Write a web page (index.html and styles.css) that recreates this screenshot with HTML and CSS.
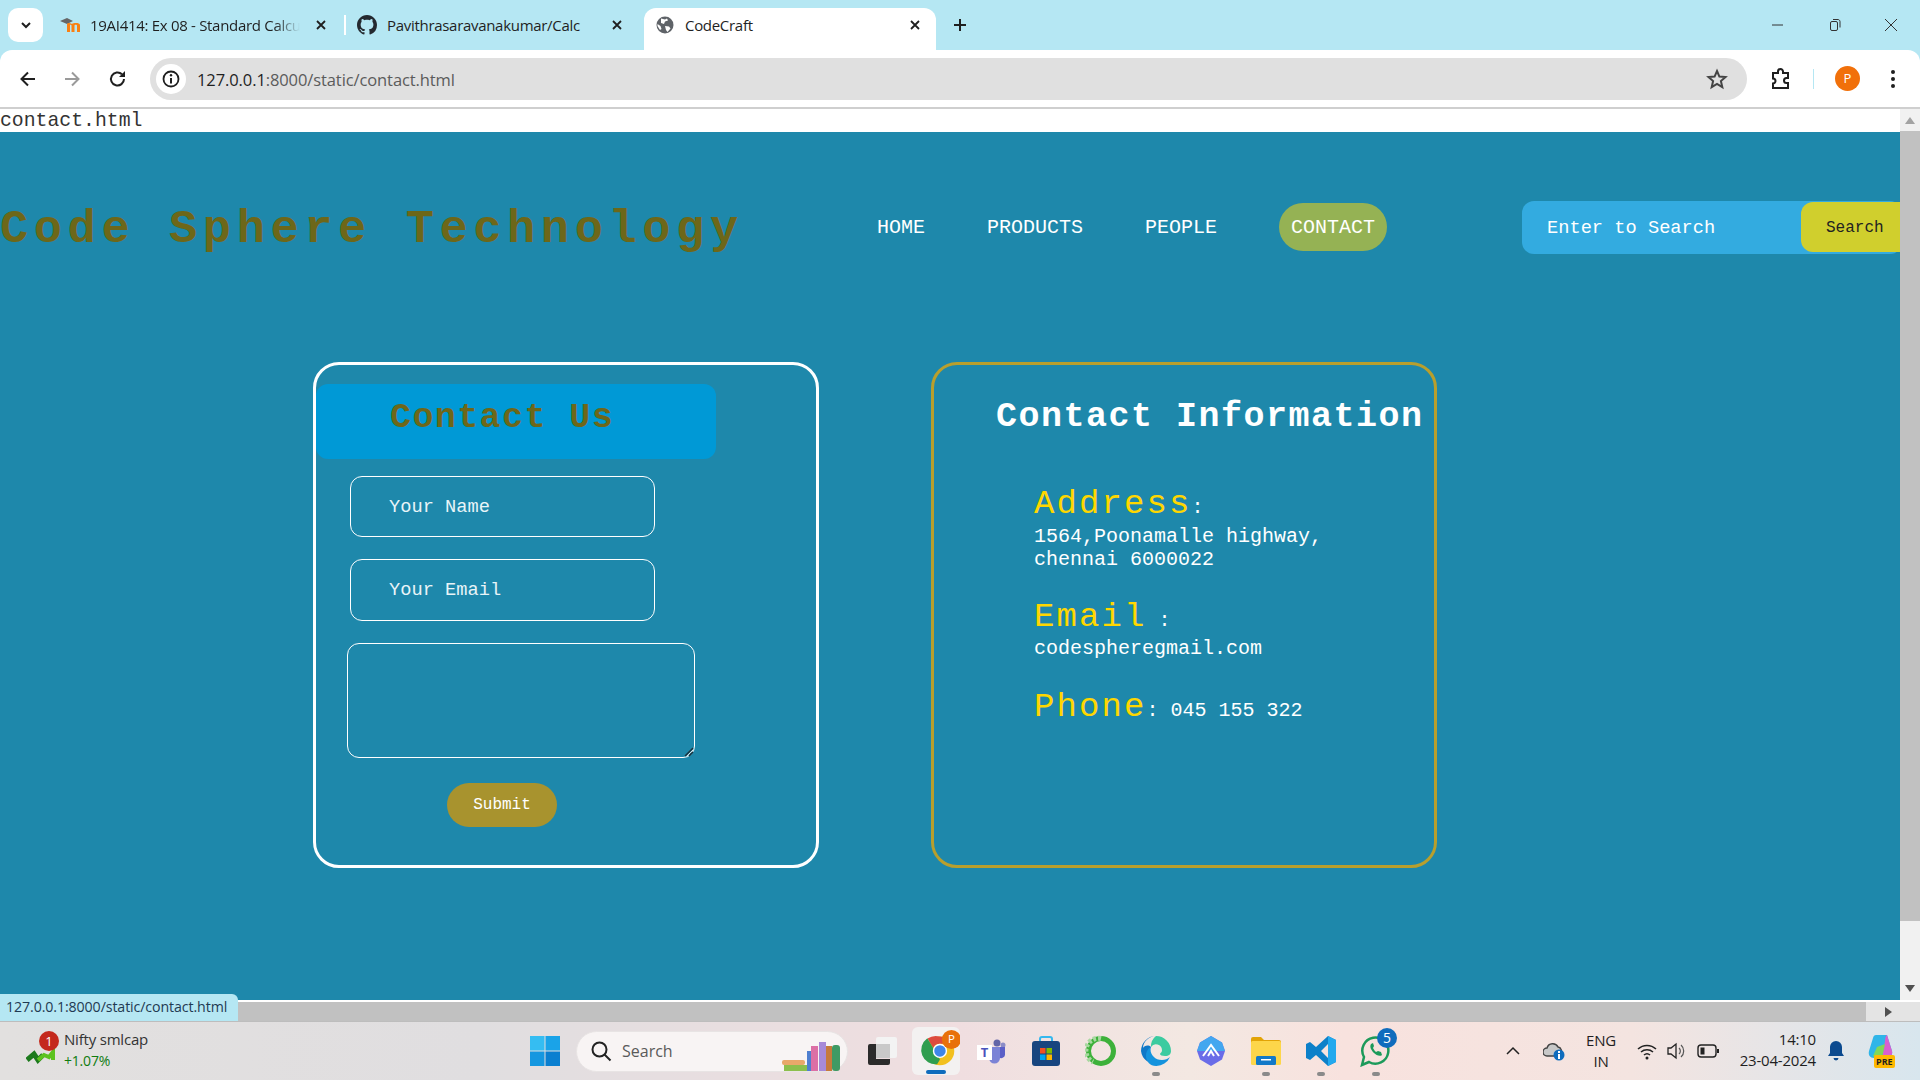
FILE: index.html
```html
<!DOCTYPE html>
<html lang="en">
<head>
  <meta charset="UTF-8" />
  <title>CodeCraft</title>
  <link rel="stylesheet" href="styles.css">
</head>
<body>
  <div class="tabstrip">
    <div class="tab-search">
      <svg width="14" height="14" viewBox="0 0 14 14"><path d="M3 5l4 4 4-4" fill="none" stroke="#1f1f1f" stroke-width="2"/></svg>
    </div>
    <div class="tab tab-one">
      <svg class="favicon" width="22" height="18" viewBox="0 0 22 18"><path d="M0 5l7-3 6 3-6 3z" fill="#666"/><path d="M7 16V8.500c0-2 3-2 5-.5 1.500-1.500 8-1.500 8 1v7h-3V9.500c0-1-2.500-1-2.500 0V16h-3V9.500c0-1-1.500-1-1.500-.5V16z" fill="#f98012"/></svg>
      <span class="tab-title fade">19AI414: Ex 08 - Standard Calcu</span>
      <svg class="tab-close" width="12" height="12" viewBox="0 0 12 12"><path d="M2 2l8 8M10 2l-8 8" stroke="#1f1f1f" stroke-width="1.800"/></svg>
    </div>
    <div class="tab-sep"></div>
    <div class="tab tab-two">
      <svg class="favicon" width="20" height="20" viewBox="0 0 16 16"><path fill="#24292f" d="M8 0C3.580 0 0 3.580 0 8c0 3.540 2.290 6.530 5.470 7.590.4.070.55-.17.55-.38 0-.19-.01-.82-.01-1.490-2.010.37-2.530-.49-2.690-.94-.09-.23-.48-.94-.82-1.130-.28-.15-.68-.52-.01-.53.63-.01 1.080.58 1.230.82.72 1.210 1.870.87 2.330.66.070-.52.28-.87.51-1.070-1.780-.2-3.640-.89-3.640-3.950 0-.87.31-1.590.82-2.150-.08-.2-.36-1.020.08-2.120 0 0 .67-.21 2.200.82.64-.18 1.320-.27 2-.27.68 0 1.360.09 2 .27 1.530-1.040 2.200-.82 2.200-.82.44 1.100.16 1.920.08 2.120.51.56.82 1.270.82 2.150 0 3.070-1.870 3.750-3.650 3.950.29.25.54.73.54 1.480 0 1.070-.01 1.930-.01 2.200 0 .21.15.46.55.38A8.013 8.013 0 0016 8c0-4.420-3.580-8-8-8z"/></svg>
      <span class="tab-title">Pavithrasaravanakumar/Calc</span>
      <svg class="tab-close" width="12" height="12" viewBox="0 0 12 12"><path d="M2 2l8 8M10 2l-8 8" stroke="#1f1f1f" stroke-width="1.800"/></svg>
    </div>
    <div class="tab tab-active">
      <svg class="favicon" width="18" height="18" viewBox="0 0 18 18"><circle cx="9" cy="9" r="8.500" fill="#5f6368"/><path d="M5 2.500l4 1 2-1 1 2-3 1-1 2.500-3-1zM9 10l4 .5 1.500 2-3 3.500-1.500-2zM1.500 8l3 2 1 3-1.500 1-2.500-4z" fill="#fff"/></svg>
      <span class="tab-title">CodeCraft</span>
      <svg class="tab-close" width="12" height="12" viewBox="0 0 12 12"><path d="M2 2l8 8M10 2l-8 8" stroke="#1f1f1f" stroke-width="1.800"/></svg>
    </div>
    <svg class="new-tab" width="14" height="14" viewBox="0 0 14 14"><path d="M7 1v12M1 7h12" stroke="#1f1f1f" stroke-width="2"/></svg>
    <div class="window-btns">
      <svg width="14" height="14" viewBox="0 0 14 14"><path d="M1 7h11" stroke="#333" stroke-width="1"/></svg>
      <svg width="14" height="14" viewBox="0 0 14 14"><rect x="2.500" y="3.500" width="7" height="9" rx="1.500" fill="none" stroke="#333"/><path d="M5 1.500h5c1 0 2 1 2 2v6" fill="none" stroke="#333"/></svg>
      <svg width="14" height="14" viewBox="0 0 14 14"><path d="M1 1l12 12M13 1L1 13" stroke="#333" stroke-width="1"/></svg>
    </div>
  </div>

  <div class="toolbar">
    <svg class="tool back" width="20" height="20" viewBox="0 0 20 20"><path d="M17 10H4M10 3.500L3.500 10l6.500 6.500" fill="none" stroke="#1f1f1f" stroke-width="2"/></svg>
    <svg class="tool forward" width="20" height="20" viewBox="0 0 20 20"><path d="M3 10h13M10 3.500l6.500 6.500-6.500 6.500" fill="none" stroke="#9a9a9a" stroke-width="2"/></svg>
    <svg class="tool reload" width="20" height="20" viewBox="0 0 20 20"><path d="M16 10a6.500 6.500 0 1 1-2-4.700" fill="none" stroke="#1f1f1f" stroke-width="2"/><path d="M17 2v6h-6z" fill="#1f1f1f"/></svg>
    <div class="omnibox">
      <div class="site-info">
        <svg width="20" height="20" viewBox="0 0 20 20"><circle cx="10" cy="10" r="7.500" fill="none" stroke="#1f1f1f" stroke-width="1.800"/><path d="M10 9v5.500" stroke="#1f1f1f" stroke-width="2"/><circle cx="10" cy="6.200" r="1.200" fill="#1f1f1f"/></svg>
      </div>
      <span class="url"><b>127.0.0.1</b>:8000/static/contact.html</span>
      <svg class="star" width="22" height="22" viewBox="0 0 22 22"><path d="M11 3l2.400 5.600 6.100.5-4.600 4 1.400 6-5.300-3.200-5.300 3.200 1.400-6-4.600-4 6.100-.5z" fill="none" stroke="#444" stroke-width="2"/></svg>
    </div>
    <svg class="tool ext" width="22" height="22" viewBox="0 0 22 22"><path d="M3 5h5V3.500a2.500 2.500 0 0 1 5 0V5h5v5h-1.500a2.500 2.500 0 0 0 0 5H18v5H3v-4.500a2.500 2.500 0 0 0 0-5z" fill="none" stroke="#1f1f1f" stroke-width="2"/></svg>
    <div class="tool-sep"></div>
    <div class="avatar">P</div>
    <svg class="tool menu" width="6" height="20" viewBox="0 0 6 20"><circle cx="3" cy="3" r="2" fill="#1f1f1f"/><circle cx="3" cy="10" r="2" fill="#1f1f1f"/><circle cx="3" cy="17" r="2" fill="#1f1f1f"/></svg>
  </div>

  <div class="viewport">
    <div class="page">
      <div class="filename">contact.html</div>
      <div class="content">
        <header class="site-header">
          <div class="logo">Code Sphere Technology</div>
          <nav class="nav">
            <a>HOME</a>
            <a>PRODUCTS</a>
            <a>PEOPLE</a>
            <a class="active">CONTACT</a>
          </nav>
          <div class="search-box">
            <span class="search-hint">Enter to Search</span>
            <button class="search-btn" type="button">Search</button>
          </div>
        </header>

        <main class="contact">
          <section class="card card-form">
            <h2 class="form-title">Contact Us</h2>
            <form class="form">
              <input class="field" type="text" placeholder="Your Name" />
              <input class="field field-email" type="email" placeholder="Your Email" />
              <div class="message-wrap">
                <textarea class="message"></textarea>
                <svg class="grip" width="10" height="10" viewBox="0 0 10 10"><path d="M1 9l8-8M5 9l4-4" stroke="#1c2f38" stroke-width="1.300"/><path d="M3 9l6-6" stroke="#d8e4e8" stroke-width="1"/></svg>
              </div>
              <button class="submit" type="button">Submit</button>
            </form>
          </section>

          <section class="card card-info">
            <h2 class="info-title">Contact Information</h2>
            <div class="info">
              <div class="info-line first-line"><span class="label">Address</span><span class="colon">:</span></div>
              <p class="info-text">1564,Poonamalle highway,<br/>chennai 6000022</p>
              <div class="info-line gap-email"><span class="label">Email</span><span class="colon"> :</span></div>
              <p class="info-text">codespheregmail.com</p>
              <div class="info-line gap-phone"><span class="label">Phone</span><span class="colon">:</span><span class="info-text"> 045 155 322</span></div>
            </div>
          </section>
        </main>
      </div>
    </div>
    <div class="vscroll">
      <div class="arrow-up"></div>
      <div class="vthumb"></div>
      <div class="arrow-down"></div>
    </div>
  </div>

  <div class="hscroll">
    <div class="hthumb"></div>
    <div class="hcorner"><div class="arrow-right"></div></div>
    <div class="status">127.0.0.1:8000/static/contact.html</div>
  </div>

  <footer class="taskbar">
    <div class="widget">
      <div class="widget-icon">
        <svg width="30" height="20" viewBox="0 0 30 20"><path d="M1 14l7-6 4 6 5-5" fill="none" stroke="#1d7a1d" stroke-width="5"/><path d="M12 14l6-5 5 2 4-5v8" fill="none" stroke="#5cc21f" stroke-width="4"/></svg>
        <span class="widget-badge">1</span>
      </div>
      <div class="widget-text">
        <div class="widget-name">Nifty smlcap</div>
        <div class="widget-up">+1.07%</div>
      </div>
    </div>

    <svg class="win" width="30" height="30" viewBox="0 0 30 30">
      <rect width="14.500" height="14.500" fill="#35bdf2"/><rect x="15.500" width="14.500" height="14.500" fill="#1aa3e8"/>
      <rect y="15.500" width="14.500" height="14.500" fill="#1597e0"/><rect x="15.500" y="15.500" width="14.500" height="14.500" fill="#0a7fd0"/>
    </svg>

    <div class="tb-search">
      <svg width="22" height="22" viewBox="0 0 22 22"><circle cx="9.500" cy="9.500" r="7" fill="none" stroke="#222" stroke-width="2"/><path d="M14.500 14.500l6 6" stroke="#222" stroke-width="2"/></svg>
      <span>Search</span>
      <svg class="books" width="64" height="32" viewBox="0 0 64 32">
        <rect x="0" y="21" width="23" height="5" rx="2" fill="#e8a86a"/><rect x="2" y="26" width="24" height="6" fill="#8cbf4d"/>
        <rect x="25" y="12" width="4" height="20" fill="#4f7fd0"/><rect x="29" y="7" width="7" height="25" fill="#dc6fa5"/>
        <rect x="37" y="3" width="7" height="29" fill="#a78ad8"/><rect x="44" y="7" width="6" height="25" fill="#c67a3c"/><rect x="50" y="6" width="8" height="26" rx="3" fill="#3f9a64"/>
      </svg>
    </div>

    <div class="tb-apps">
      <div class="tb-slot">
        <svg width="30" height="30" viewBox="0 0 30 30"><rect x="9" y="1" width="21" height="21" rx="2" fill="#f3f3f3"/><rect x="9" y="8" width="14" height="14" fill="#c9c9c9"/><path d="M1 10a2 2 0 0 1 2-2h6v15h14v4a2 2 0 0 1-2 2H3a2 2 0 0 1-2-2z" fill="#2b2b2b"/></svg>
      </div>
      <div class="tb-slot tb-current">
        <svg width="44" height="44" viewBox="0 0 44 44"><circle cx="23" cy="24" r="15" fill="#f2c01e"/><path d="M23 9a15 15 0 0 1 13 7.500H23a7.500 7.500 0 0 0-7 4.500L10 11a15 15 0 0 1 13-2z" fill="#dd4b3e"/><path d="M10 11l6.500 11 6.500 11 -3 5a15 15 0 0 1-10.500-27z" fill="#2f9e4f"/><circle cx="23" cy="24" r="7.500" fill="#fff"/><circle cx="23" cy="24" r="6" fill="#3f86e8"/><circle cx="35" cy="12" r="10" fill="#e8710a"/><text x="35" y="16" class="chrome-p">P</text></svg>
        <span class="run-line"></span>
      </div>
      <div class="tb-slot">
        <svg width="30" height="30" viewBox="0 0 30 30"><circle cx="21" cy="7" r="3.500" fill="#6264a7"/><circle cx="27" cy="9" r="2.500" fill="#8b8cc7"/><path d="M13 11h11v11a5.500 5.500 0 0 1-11 0z" fill="#7b83d6"/><path d="M24 11h5v8a4 4 0 0 1-5 3z" fill="#5b5fc7"/><rect x="1" y="9" width="15" height="15" fill="#fff"/><text x="8.500" y="21" class="teams-t">T</text></svg>
      </div>
      <div class="tb-slot">
        <svg width="30" height="30" viewBox="0 0 30 30"><path d="M9 6V3a2 2 0 0 1 2-2h8a2 2 0 0 1 2 2v3" fill="none" stroke="#35b8ee" stroke-width="2"/><rect x="1" y="5" width="28" height="25" rx="3" fill="#17457f"/><rect x="9" y="12" width="5.500" height="5.500" fill="#f25022"/><rect x="15.500" y="12" width="5.500" height="5.500" fill="#7fba00"/><rect x="9" y="18.500" width="5.500" height="5.500" fill="#00a4ef"/><rect x="15.500" y="18.500" width="5.500" height="5.500" fill="#ffb900"/></svg>
      </div>
      <div class="tb-slot">
        <svg width="32" height="32" viewBox="0 0 32 32"><circle cx="16" cy="16" r="12.500" fill="none" stroke="#3db13a" stroke-width="5"/><path d="M16 3.500A12.500 12.500 0 0 0 8 27" fill="none" stroke="#a8d8a0" stroke-width="5" stroke-dasharray="3 2"/></svg>
      </div>
      <div class="tb-slot">
        <svg width="30" height="30" viewBox="0 0 30 30"><path d="M15 0a15 15 0 0 1 15 15c0 3-2 5-6 5-3 0-5-1-5-2 0-1 2-1 2-4a6 6 0 0 0-11-3A13 13 0 0 1 15 0z" fill="#3ccba0"/><path d="M10 11c-4 5-1 14 7 17A15 15 0 0 1 0 15 15 15 0 0 1 15 0C8 0 2 6 2 12c1-2 5-4 8-1z" fill="#0f78c8"/><path d="M10 11c-2 6 3 13 11 13 3 0 6-1 8-3a15 15 0 0 1-14 9C9 30 5 25 5 20c0-4 2-8 5-9z" fill="#1593dd"/></svg>
        <span class="run-dot"></span>
      </div>
      <div class="tb-slot">
        <svg width="28" height="30" viewBox="0 0 28 30"><path d="M14 0l11 6.500 3 8.500-3 8.500L14 30 3 23.500 0 15l3-8.500z" fill="#6a6ce8"/><path d="M14 0l11 6.500 3 8.500H0l3-8.500z" fill="#43a7ef"/><path d="M6 20l8-11 8 11M11 20l3-5 3 5" fill="none" stroke="#fff" stroke-width="2"/></svg>
      </div>
      <div class="tb-slot">
        <svg width="30" height="28" viewBox="0 0 30 28"><path d="M0 2a2 2 0 0 1 2-2h8l3 3h15a2 2 0 0 1 2 2v3H0z" fill="#e2a306"/><rect y="4" width="30" height="24" rx="1.500" fill="#fdd64a"/><rect x="5" y="19" width="20" height="9" rx="1.500" fill="#1279c8"/><rect x="10" y="22" width="10" height="1.500" fill="#fff"/></svg>
        <span class="run-dot"></span>
      </div>
      <div class="tb-slot">
        <svg width="30" height="30" viewBox="0 0 30 30"><path d="M22 0l8 4v22l-8 4-12-11-6 5-4-2V8l4-2 6 5zM22 8l-7 7 7 7z" fill="#0d80c9"/><path d="M22 0l8 4v22l-8 4z" fill="#23a9ee"/></svg>
        <span class="run-dot"></span>
      </div>
      <div class="tb-slot">
        <svg width="32" height="32" viewBox="0 0 32 32"><path d="M2 30l2-8a13 13 0 1 1 5 5z" fill="none" stroke="#1c9a5a" stroke-width="2.500"/><path d="M11 9c-2 3 1 7 3 9s6 4 8 2l-1-3-3-1-2 1c-1-1-2-2-3-4l1-2-1-3z" fill="#1c9a5a"/></svg>
        <span class="wa-badge">5</span>
        <span class="run-dot"></span>
      </div>
    </div>

    <div class="tray">
      <svg class="tray-up" width="16" height="10" viewBox="0 0 16 10"><path d="M2 8l6-6 6 6" fill="none" stroke="#222" stroke-width="1.500"/></svg>
      <svg class="tray-cloud" width="22" height="20" viewBox="0 0 22 20"><path d="M4 15a4 4 0 0 1 0-8 6 6 0 0 1 11-1 4 4 0 0 1 2 7v2z" fill="#c8c8c8" stroke="#444" stroke-width="1.500"/><circle cx="16" cy="14" r="5.500" fill="#0f6cbd"/><rect x="15" y="13" width="2" height="5" fill="#fff"/><rect x="15" y="10" width="2" height="2" fill="#fff"/></svg>
      <div class="lang">ENG<br/>IN</div>
      <svg class="tray-wifi" width="20" height="18" viewBox="0 0 20 18"><path d="M1 7a13 13 0 0 1 18 0M4 10a9 9 0 0 1 12 0M7 13a4.500 4.500 0 0 1 6 0" fill="none" stroke="#222" stroke-width="1.500"/><circle cx="10" cy="16" r="1.500" fill="#222"/></svg>
      <svg class="tray-vol" width="20" height="18" viewBox="0 0 20 18"><path d="M1 6h3l5-4v14l-5-4H1z" fill="none" stroke="#222" stroke-width="1.300"/><path d="M12 6a4 4 0 0 1 0 6M14 3a8 8 0 0 1 0 12" fill="none" stroke="#555" stroke-width="1.200"/></svg>
      <svg class="tray-bat" width="22" height="14" viewBox="0 0 22 14"><rect x="1" y="1" width="18" height="12" rx="3" fill="none" stroke="#222" stroke-width="1.400"/><rect x="3.500" y="3.500" width="4" height="7" fill="#222"/><rect x="20" y="5" width="2" height="4" fill="#222"/></svg>
      <div class="clock">14:10<br/>23-04-2024</div>
      <svg class="tray-bell" width="18" height="22" viewBox="0 0 18 22"><path d="M9 1a6 6 0 0 1 6 6v6l2 3H1l2-3V7a6 6 0 0 1 6-6z" fill="#0b4a8f"/><path d="M6.500 18a2.500 2.500 0 0 0 5 0z" fill="#0b4a8f"/></svg>
      <div class="copilot">
        <svg width="30" height="26" viewBox="0 0 30 26"><path d="M8 1h11l5 16c1 4-2 7-6 7H6c-4 0-6-3-5-7L5 4c.4-2 1.500-3 3-3z" fill="#2fb5e8"/><path d="M19 1l5 16c1 4-2 7-6 7h-4l3-17c.3-3 1-6 2-6z" fill="#d85fd0"/><path d="M5 22c3 2 6 2 9 2l3-14-8 3z" fill="#7fd858"/></svg>
        <span class="pre">PRE</span>
      </div>
    </div>
  </footer>
</body>
</html>
```

FILE: styles.css
```css
* {
  box-sizing: border-box;
}

html, body {
  margin: 0;
  padding: 0;
  width: 1920px;
  height: 1080px;
  overflow: hidden;
}

body {
  display: flex;
  flex-direction: column;
  font-family: 'Open Sans', 'Noto Sans', sans-serif;
  background: #b5e7f3;
  color: #1f1f1f;
}

/* tab strip */
.tabstrip {
  height: 50px;
  display: flex;
  align-items: flex-end;
  background: #b5e7f3;
}

.tab-search {
  width: 35px;
  height: 34px;
  margin: 0 0 8px 8px;
  border-radius: 10px;
  background: #fff;
  display: flex;
  align-items: center;
  justify-content: center;
}

.tab {
  height: 42px;
  display: flex;
  align-items: center;
  padding-bottom: 9px;
  font-size: 15px;
  letter-spacing: -0.3px;
  white-space: nowrap;
}

.tab-one {
  width: 301px;
  padding-left: 17px;
}

.tab-two {
  width: 298px;
  padding-left: 11px;
}

.tab-active {
  width: 292px;
  padding-left: 12px;
  background: #fff;
  border-radius: 12px 12px 0 0;
}

.favicon {
  flex-shrink: 0;
}

.tab-title {
  overflow: hidden;
}

.tab-one .tab-title {
  width: 210px;
  margin-left: 8px;
}

.tab-title.fade {
  mask-image: linear-gradient(to right, #000 88%, transparent 100%);
}

.tab-two .tab-title {
  width: 219px;
  margin-left: 10px;
}

.tab-active .tab-title {
  width: 214px;
  margin-left: 11px;
}

.tab-close {
  flex-shrink: 0;
}

.tab-one .tab-close {
  margin-left: 15px;
}

.tab-two .tab-close {
  margin-left: 5px;
}

.tab-active .tab-close {
  margin-left: 10px;
}

.tab-sep {
  width: 2px;
  height: 20px;
  margin-bottom: 15px;
  background: #fff;
}

.new-tab {
  margin: 0 0 18px 17px;
}

.window-btns {
  margin-left: auto;
  margin-bottom: 18px;
  width: 149px;
  padding: 0 22px 0 0;
  display: flex;
  justify-content: space-between;
}

/* toolbar */
.toolbar {
  height: 59px;
  flex-shrink: 0;
  display: flex;
  align-items: center;
  background: #fff;
  border-radius: 12px 12px 0 0;
  border-bottom: 2px solid #cfcfcf;
  padding-left: 18px;
}

.tool {
  flex-shrink: 0;
}

.forward {
  margin-left: 24px;
}

.reload {
  margin-left: 26px;
}

.omnibox {
  width: 1597px;
  height: 42px;
  margin-left: 22px;
  border-radius: 21px;
  background: #e0e0e0;
  display: flex;
  align-items: center;
  padding-left: 6px;
}

.site-info {
  width: 30px;
  height: 30px;
  border-radius: 50%;
  background: #fff;
  display: flex;
  align-items: center;
  justify-content: center;
}

.url {
  margin-left: 11px;
  padding-top: 1px;
  font-size: 16.500px;
  letter-spacing: -0.1px;
  color: #5b5b5b;
}

.url b {
  font-weight: 400;
  color: #1f1f1f;
}

.star {
  margin-left: auto;
  margin-right: 19px;
}

.ext {
  margin-left: 23px;
}

.tool-sep {
  width: 1px;
  height: 20px;
  margin-left: 21px;
  background: #b5e7f3;
}

.avatar {
  width: 25px;
  height: 25px;
  margin-left: 21px;
  border-radius: 50%;
  background: #f1700a;
  color: #fff;
  font-size: 13px;
  text-align: center;
  line-height: 25px;
}

.menu {
  margin-left: 30px;
}

/* page */
.viewport {
  height: 891px;
  flex-shrink: 0;
  display: flex;
  background: #fff;
}

.page {
  width: 1900px;
  overflow: hidden;
  display: flex;
  flex-direction: column;
}

.filename {
  height: 23px;
  font-family: 'Liberation Mono', monospace;
  font-size: 19.800px;
  line-height: 25px;
  color: #333;
  background: #fff;
}

.content {
  flex: 1;
  background: #1e88ab;
}

.site-header {
  width: 1960px;
  height: 230px;
  display: flex;
  align-items: flex-start;
  padding-top: 69px;
}

.logo {
  width: 877px;
  margin-top: 4px;
  font-family: 'Liberation Mono', monospace;
  font-weight: bold;
  font-size: 47px;
  letter-spacing: 5.600px;
  line-height: 50px;
  color: #6d6719;
  white-space: nowrap;
}

.nav {
  display: flex;
  align-items: center;
  width: 511px;
  height: 48px;
  margin-top: 2px;
  font-family: 'Liberation Mono', monospace;
  font-size: 20px;
  color: #fff;
}

.nav a {
  margin-right: 62px;
  line-height: 50px;
  height: 48px;
}

.nav a.active {
  padding: 0 12px;
  margin-right: 0;
  border-radius: 24px;
  background: #95b254;
}

.search-box {
  width: 380px;
  height: 53px;
  margin-left: 134px;
  border-radius: 12px;
  background: #33abe0;
  display: flex;
  align-items: center;
  padding-left: 25px;
  position: relative;
  font-family: 'Liberation Mono', monospace;
}

.search-hint {
  font-size: 18.700px;
  color: #fff;
}

.search-btn {
  position: absolute;
  left: 279px;
  top: 1px;
  width: 110px;
  height: 50px;
  border: none;
  border-radius: 12px;
  background: #d0cf2d;
  color: #222;
  font-family: 'Liberation Mono', monospace;
  font-size: 16px;
  text-align: left;
  padding: 2px 0 0 25px;
}

.contact {
  display: flex;
  gap: 112px;
  padding-left: 313px;
}

.card {
  width: 506px;
  height: 506px;
  border-radius: 26px;
  border: 3px solid #fff;
}

.card-info {
  border-color: #b89f2d;
}

.form-title {
  width: 400px;
  height: 75px;
  margin: 19px 0 0 0;
  padding: 14px 0 0 74px;
  border-radius: 12px;
  background: #0099d6;
  font-family: 'Liberation Mono', monospace;
  font-size: 35px;
  letter-spacing: 1.400px;
  line-height: 40px;
  color: #6d6719;
}

.form {
  display: flex;
  flex-direction: column;
  align-items: flex-start;
  padding-top: 17px;
}

.field {
  width: 305px;
  height: 61px;
  margin: 0 0 22px 34px;
  padding: 0 0 0 38px;
  border: 1px solid #fff;
  border-radius: 12px;
  background: transparent;
  font-family: 'Liberation Mono', monospace;
  font-size: 18.700px;
  color: #fff;
}

.field::placeholder {
  color: #e8f4f8;
  opacity: 1;
}

.field-email {
  height: 62px;
}

.message-wrap {
  position: relative;
  margin: 0 0 25px 31px;
}

.message {
  display: block;
  width: 348px;
  height: 115px;
  border: 1px solid #fff;
  border-radius: 12px;
  background: transparent;
  resize: none;
}

.grip {
  position: absolute;
  right: 1px;
  bottom: 1px;
}

.submit {
  width: 110px;
  height: 44px;
  margin-left: 131px;
  padding-top: 1px;
  border: none;
  border-radius: 22px;
  background: #a8932e;
  color: #fff;
  font-family: 'Liberation Mono', monospace;
  font-size: 16px;
}

.info-title {
  margin: 32px 0 0 62px;
  font-family: 'Liberation Mono', monospace;
  font-size: 35px;
  letter-spacing: 1.500px;
  line-height: 40px;
  color: #fff;
  white-space: nowrap;
}

.info {
  margin: 52px 0 0 100px;
  font-family: 'Liberation Mono', monospace;
  color: #fff;
}

.info-line {
  line-height: 38px;
  white-space: nowrap;
}

.first-line {
  line-height: 31px;
  height: 31px;
  margin-bottom: 5px;
}

.gap-email {
  margin-top: 28px;
  margin-bottom: 2px;
  line-height: 36px;
  height: 36px;
}

.gap-phone {
  margin-top: 28px;
}

.label {
  font-size: 34px;
  letter-spacing: 2.100px;
  color: #ffd700;
}

.colon {
  font-size: 20px;
  white-space: pre;
}

.info-text {
  margin: 0;
  font-size: 20px;
  line-height: 23px;
  white-space: pre;
}

/* scrollbars */
.vscroll {
  width: 20px;
  background: #f1f1f1;
  display: flex;
  flex-direction: column;
  align-items: center;
}

.arrow-up {
  width: 0;
  height: 0;
  margin-top: 8px;
  border-left: 5px solid transparent;
  border-right: 5px solid transparent;
  border-bottom: 7px solid #a3a3a3;
}

.vthumb {
  width: 20px;
  height: 790px;
  margin-top: 7px;
  background: #c1c1c1;
}

.arrow-down {
  width: 0;
  height: 0;
  margin-top: 64px;
  border-left: 5px solid transparent;
  border-right: 5px solid transparent;
  border-top: 7px solid #505050;
}

.hscroll {
  height: 21px;
  flex-shrink: 0;
  display: flex;
  position: relative;
  border-top: 2px solid #fff;
  background: #f1f1f1;
}

.hthumb {
  width: 1866px;
  background: #c1c1c1;
}

.hcorner {
  flex: 1;
  background: #e4e4e4;
  display: flex;
  align-items: center;
  padding-left: 19px;
}

.arrow-right {
  width: 0;
  height: 0;
  border-top: 5px solid transparent;
  border-bottom: 5px solid transparent;
  border-left: 7px solid #505050;
}

.status {
  position: absolute;
  left: 0;
  bottom: 0;
  height: 27px;
  width: 238px;
  padding-left: 6px;
  background: #b5e7f3;
  border-radius: 0 6px 0 0;
  font-size: 14.200px;
  line-height: 26px;
  letter-spacing: -0.1px;
  color: #1f3a52;
  white-space: nowrap;
}

/* taskbar */
.taskbar {
  flex: 1;
  display: flex;
  align-items: center;
  border-top: 1px solid #bdbdbd;
  background: linear-gradient(90deg, #e2e0df 0%, #e0dee0 25%, #f0dee0 50%, #f3e8e2 62%, #f8e2de 70%, #f4e4e0 85%, #d8e6ee 100%);
}

.widget {
  width: 530px;
  padding-left: 26px;
  display: flex;
  align-items: center;
  flex-shrink: 0;
}

.widget-icon {
  width: 38px;
  height: 40px;
  padding-top: 15px;
  position: relative;
}

.widget-badge {
  position: absolute;
  left: 13px;
  top: 0;
  width: 20px;
  height: 20px;
  border-radius: 50%;
  background: #c4281c;
  color: #fff;
  font-size: 13px;
  text-align: center;
  line-height: 20px;
}

.widget-text {
  margin-top: -2px;
  font-size: 15px;
  line-height: 20px;
  letter-spacing: -0.2px;
  color: #333;
}

.widget-name {
  margin-bottom: 2px;
}

.widget-up {
  color: #107c10;
  font-size: 14px;
}

.win {
  flex-shrink: 0;
}

.tb-search {
  width: 272px;
  height: 41px;
  margin-left: 16px;
  border-radius: 21px;
  border: 1px solid #e8e4e4;
  background: #f8f4f4;
  display: flex;
  align-items: center;
  padding-left: 13px;
  font-size: 16px;
  color: #5a5a5a;
  flex-shrink: 0;
}

.tb-search span {
  margin-left: 10px;
}

.books {
  margin-left: auto;
  margin-right: 1px;
  margin-top: 7px;
}

.tb-apps {
  display: flex;
  margin-left: 6px;
  flex-shrink: 0;
}

.tb-slot {
  width: 55px;
  height: 48px;
  display: flex;
  align-items: center;
  justify-content: center;
  position: relative;
}

.tb-current {
  background: #f3f1f1;
  border-radius: 6px;
  width: 48px;
  margin: 0 3px;
}

.tb-current svg {
  margin-left: 6px;
  margin-top: -4px;
}

.chrome-p {
  font-size: 12px;
  fill: #fff;
  text-anchor: middle;
}

.teams-t {
  font-size: 13px;
  font-weight: bold;
  fill: #4b53bc;
  text-anchor: middle;
}

.run-line {
  position: absolute;
  left: 14px;
  bottom: 1px;
  width: 20px;
  height: 4px;
  border-radius: 2px;
  background: #0f6cbd;
}

.run-dot {
  position: absolute;
  left: 24px;
  bottom: -1px;
  width: 8px;
  height: 4px;
  border-radius: 2px;
  background: #8a8a8a;
}

.wa-badge {
  position: absolute;
  left: 29px;
  top: 1px;
  width: 20px;
  height: 20px;
  border-radius: 50%;
  background: #0f6cbd;
  color: #fff;
  font-size: 14px;
  text-align: center;
  line-height: 20px;
}

.tray {
  flex: 1;
  display: flex;
  align-items: center;
  margin-left: 102px;
  min-width: 0;
}

.tray-cloud {
  margin-left: 22px;
}

.lang {
  width: 40px;
  margin-left: 16px;
  text-align: center;
  font-size: 15px;
  line-height: 21px;
  letter-spacing: -0.2px;
}

.tray-wifi {
  margin-left: 16px;
}

.tray-vol {
  margin-left: 10px;
}

.tray-bat {
  margin-left: 10px;
}

.clock {
  width: 90px;
  margin-left: 7px;
  margin-top: -2px;
  text-align: right;
  font-size: 15px;
  line-height: 21px;
  letter-spacing: -0.2px;
}

.tray-bell {
  margin-left: 11px;
}

.copilot {
  margin-left: 23px;
  position: relative;
  height: 34px;
}

.pre {
  position: absolute;
  left: 6px;
  top: 21px;
  padding: 0 2px;
  border-radius: 2px;
  background: #ffb900;
  font-size: 9px;
  font-weight: bold;
  line-height: 13px;
}
```
